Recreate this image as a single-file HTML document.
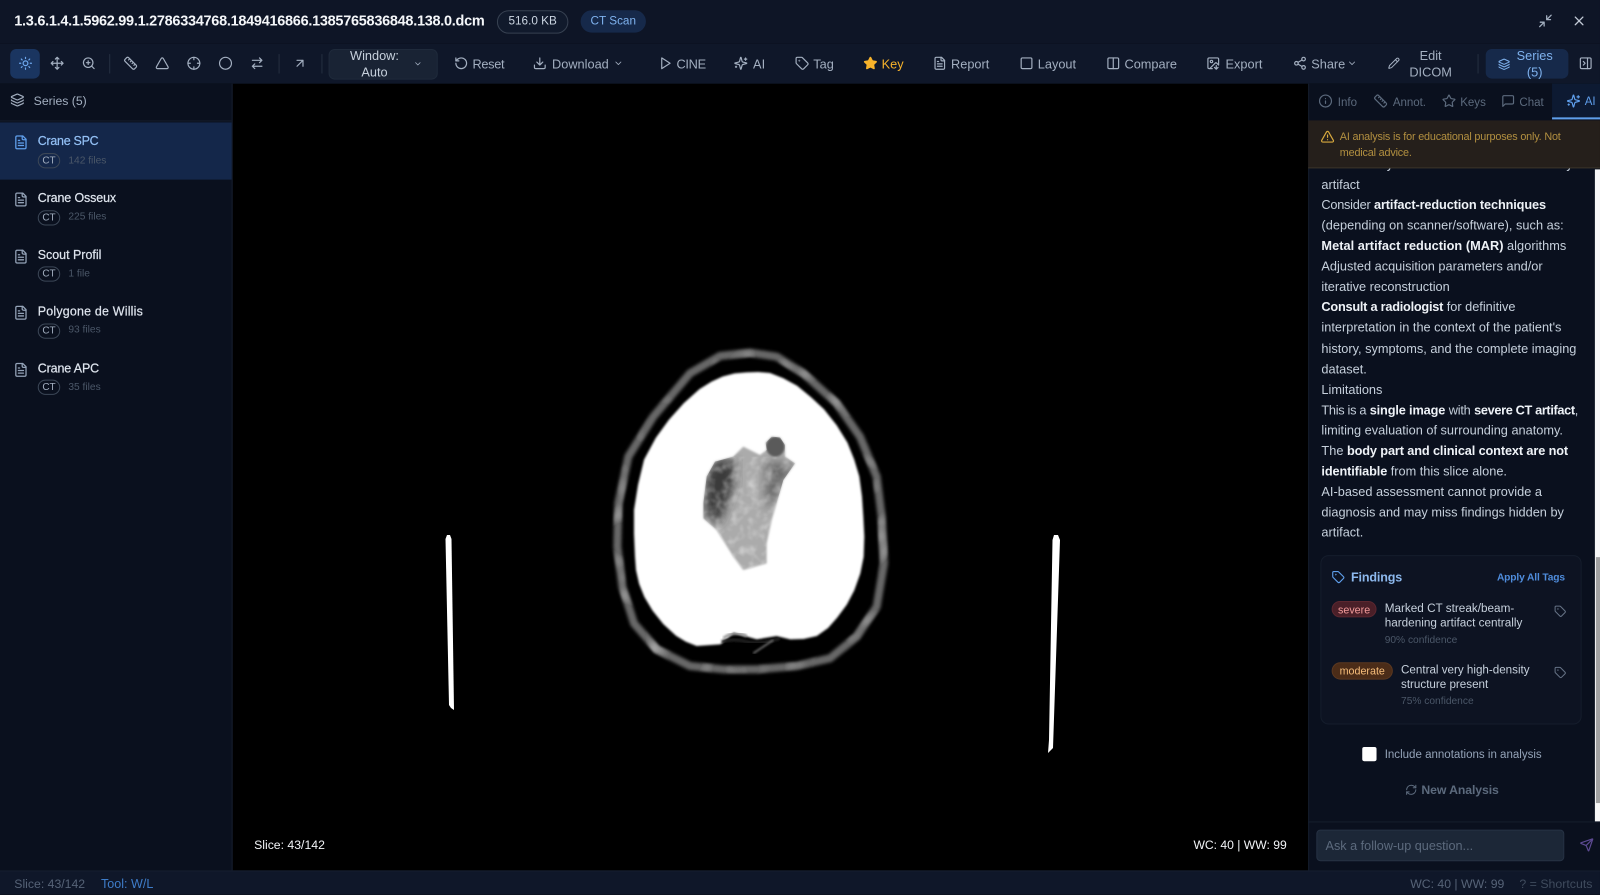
<!DOCTYPE html>
<html lang="en"><head><meta charset="utf-8"><title>DICOM Viewer</title>
<style>
html,body{margin:0;padding:0;width:1600px;height:895px;overflow:hidden;background:#000}
body{font-family:"Liberation Sans",sans-serif;position:relative}
#r{position:absolute;left:0;top:0;width:1568px;height:877.1px;transform:scale(1.020408);transform-origin:0 0;overflow:hidden;background:#000;color:#a3afc0;font-size:12.5px}
.b{position:absolute}
.t{position:absolute;white-space:nowrap;line-height:20px;height:20px}
.c{transform:translateX(-50%);text-align:center}
svg.i{position:absolute;fill:none;stroke:currentColor;stroke-width:2;stroke-linecap:round;stroke-linejoin:round;overflow:visible}
.tb{width:14px;height:14px;top:55px;color:#a3afc0}
.p{font-size:12.5px;color:#c6d0dc}
.p b{color:#eef2f7;font-weight:700;letter-spacing:-.13px}
.n{font-size:12.2px;color:#dfe5ee;-webkit-text-stroke:.2px currentColor}
.bd{position:absolute;left:37px;width:20px;height:13px;border:1px solid #3c4757;border-radius:8px;color:#a3afc0;font-size:9.8px;line-height:13px;text-align:center}
.f{font-size:10px;color:#4b5768}
.tab{font-size:11.3px;color:#5c6a7d}
.sep{position:absolute;top:53px;width:1px;height:19px;background:#252f40}
</style></head><body>
<svg width="0" height="0" style="position:absolute"><defs>
<symbol id="sun" viewBox="0 0 24 24"><circle cx="12" cy="12" r="4"/><path d="M12 2v2M12 20v2M4.93 4.93l1.41 1.41M17.66 17.66l1.41 1.41M2 12h2M20 12h2M6.34 17.66l-1.41 1.41M19.07 4.93l-1.41 1.41"/></symbol>
<symbol id="move" viewBox="0 0 24 24"><path d="M12 2v20M2 12h20M5 9l-3 3 3 3M9 5l3-3 3 3M15 19l-3 3-3-3M19 9l3 3-3 3"/></symbol>
<symbol id="zoom" viewBox="0 0 24 24"><circle cx="11" cy="11" r="8"/><path d="M21 21l-4.3-4.3M11 8v6M8 11h6"/></symbol>
<symbol id="ruler" viewBox="0 0 24 24"><path d="M21.3 15.3a2.4 2.4 0 0 1 0 3.4l-2.6 2.6a2.4 2.4 0 0 1-3.4 0L2.7 8.7a2.41 2.41 0 0 1 0-3.4l2.6-2.6a2.41 2.41 0 0 1 3.4 0Z"/><path d="M14.5 12.5l2-2M11.5 9.5l2-2M8.5 6.5l2-2M17.5 15.5l2-2"/></symbol>
<symbol id="tri" viewBox="0 0 24 24"><path d="M21.73 18l-8-14a2 2 0 0 0-3.48 0l-8 14A2 2 0 0 0 4 21h16a2 2 0 0 0 1.73-3"/></symbol>
<symbol id="cross" viewBox="0 0 24 24"><circle cx="12" cy="12" r="10"/><path d="M22 12h-4M6 12H2M12 6V2M12 22v-4"/></symbol>
<symbol id="circ" viewBox="0 0 24 24"><circle cx="12" cy="12" r="10"/></symbol>
<symbol id="swap" viewBox="0 0 24 24"><path d="M16 3l4 4-4 4M20 7H4M8 21l-4-4 4-4M4 17h16"/></symbol>
<symbol id="ur" viewBox="0 0 24 24"><path d="M7 7h10v10M7 17L17 7"/></symbol>
<symbol id="chev" viewBox="0 0 24 24"><path d="M6 9l6 6 6-6"/></symbol>
<symbol id="reset" viewBox="0 0 24 24"><path d="M3 12a9 9 0 1 0 9-9 9.75 9.75 0 0 0-6.74 2.74L3 8"/><path d="M3 3v5h5"/></symbol>
<symbol id="dl" viewBox="0 0 24 24"><path d="M21 15v4a2 2 0 0 1-2 2H5a2 2 0 0 1-2-2v-4M7 10l5 5 5-5M12 15V3"/></symbol>
<symbol id="play" viewBox="0 0 24 24"><polygon points="6 3 20 12 6 21 6 3"/></symbol>
<symbol id="spark" viewBox="0 0 24 24"><path d="M9.937 15.5A2 2 0 0 0 8.5 14.063l-6.135-1.582a.5.5 0 0 1 0-.962L8.5 9.936A2 2 0 0 0 9.937 8.5l1.582-6.135a.5.5 0 0 1 .963 0L14.063 8.5A2 2 0 0 0 15.5 9.937l6.135 1.581a.5.5 0 0 1 0 .964L15.5 14.063a2 2 0 0 0-1.437 1.437l-1.582 6.135a.5.5 0 0 1-.963 0z"/><path d="M20 3v4M22 5h-4M4 17v2M5 18H3"/></symbol>
<symbol id="tag" viewBox="0 0 24 24"><path d="M12.586 2.586A2 2 0 0 0 11.172 2H4a2 2 0 0 0-2 2v7.172a2 2 0 0 0 .586 1.414l8.704 8.704a2.426 2.426 0 0 0 3.42 0l6.58-6.58a2.426 2.426 0 0 0 0-3.42z"/><circle cx="7.5" cy="7.5" r=".5"/></symbol>
<symbol id="star" viewBox="0 0 24 24"><path d="M11.525 2.295a.53.53 0 0 1 .95 0l2.31 4.679a2.123 2.123 0 0 0 1.595 1.16l5.166.756a.53.53 0 0 1 .294.904l-3.736 3.638a2.123 2.123 0 0 0-.611 1.878l.882 5.14a.53.53 0 0 1-.771.56l-4.618-2.428a2.122 2.122 0 0 0-1.973 0L6.396 21.01a.53.53 0 0 1-.77-.56l.881-5.139a2.122 2.122 0 0 0-.611-1.879L2.16 9.795a.53.53 0 0 1 .294-.906l5.165-.755a2.122 2.122 0 0 0 1.597-1.16z"/></symbol>
<symbol id="file" viewBox="0 0 24 24"><path d="M15 2H6a2 2 0 0 0-2 2v16a2 2 0 0 0 2 2h12a2 2 0 0 0 2-2V7Z"/><path d="M14 2v4a2 2 0 0 0 2 2h4M10 9H8M16 13H8M16 17H8"/></symbol>
<symbol id="sq" viewBox="0 0 24 24"><rect x="3" y="3" width="18" height="18" rx="2"/></symbol>
<symbol id="cols" viewBox="0 0 24 24"><rect x="3" y="3" width="18" height="18" rx="2"/><path d="M12 3v18"/></symbol>
<symbol id="exp" viewBox="0 0 24 24"><path d="M10.3 21H5a2 2 0 0 1-2-2V5a2 2 0 0 1 2-2h14a2 2 0 0 1 2 2v10l-3.1-3.1a2 2 0 0 0-2.814.014L6 21"/><path d="M14 19l3 3v-6M17 22l3-3"/><circle cx="9" cy="9" r="2"/></symbol>
<symbol id="share" viewBox="0 0 24 24"><circle cx="18" cy="5" r="3"/><circle cx="6" cy="12" r="3"/><circle cx="18" cy="19" r="3"/><path d="M8.59 13.51l6.83 3.98M15.41 6.51l-6.82 3.98"/></symbol>
<symbol id="pen" viewBox="0 0 24 24"><path d="M21.174 6.812a1 1 0 0 0-3.986-3.987L3.842 16.174a2 2 0 0 0-.5.83l-1.321 4.352a.5.5 0 0 0 .623.622l4.353-1.32a2 2 0 0 0 .83-.497z"/><path d="M15 5l4 4"/></symbol>
<symbol id="lay" viewBox="0 0 24 24"><path d="M12.83 2.18a2 2 0 0 0-1.66 0L2.6 6.08a1 1 0 0 0 0 1.83l8.58 3.91a2 2 0 0 0 1.66 0l8.58-3.9a1 1 0 0 0 0-1.83z"/><path d="M2 12a1 1 0 0 0 .58.91l8.6 3.91a2 2 0 0 0 1.65 0l8.58-3.9A1 1 0 0 0 22 12"/><path d="M2 17a1 1 0 0 0 .58.91l8.6 3.91a2 2 0 0 0 1.65 0l8.58-3.9A1 1 0 0 0 22 17"/></symbol>
<symbol id="panel" viewBox="0 0 24 24"><rect x="3" y="3" width="18" height="18" rx="2"/><path d="M15 3v18M8 9l3 3-3 3"/></symbol>
<symbol id="info" viewBox="0 0 24 24"><circle cx="12" cy="12" r="10"/><path d="M12 16v-4M12 8h.01"/></symbol>
<symbol id="msg" viewBox="0 0 24 24"><path d="M21 15a2 2 0 0 1-2 2H7l-4 4V5a2 2 0 0 1 2-2h14a2 2 0 0 1 2 2z"/></symbol>
<symbol id="warn" viewBox="0 0 24 24"><path d="M21.73 18l-8-14a2 2 0 0 0-3.48 0l-8 14A2 2 0 0 0 4 21h16a2 2 0 0 0 1.73-3"/><path d="M12 9v4M12 17h.01"/></symbol>
<symbol id="ref" viewBox="0 0 24 24"><path d="M3 12a9 9 0 0 1 9-9 9.75 9.75 0 0 1 6.74 2.74L21 8"/><path d="M21 3v5h-5"/><path d="M21 12a9 9 0 0 1-9 9 9.75 9.75 0 0 1-6.74-2.74L3 16"/><path d="M8 16H3v5"/></symbol>
<symbol id="send" viewBox="0 0 24 24"><path d="M14.536 21.686a.5.5 0 0 0 .937-.024l6.5-19a.496.496 0 0 0-.635-.635l-19 6.5a.5.5 0 0 0-.024.937l7.93 3.18a2 2 0 0 1 1.112 1.11z"/><path d="M21.854 2.147l-10.94 10.939"/></symbol>
<symbol id="min" viewBox="0 0 24 24"><path d="M14 10l7-7M20 10h-6V4M3 21l7-7M4 14h6v6"/></symbol>
<symbol id="x" viewBox="0 0 24 24"><path d="M18 6L6 18M6 6l12 12"/></symbol>
<filter id="bl" x="-5%" y="-5%" width="110%" height="110%"><feGaussianBlur stdDeviation="3.5"/></filter>
<filter id="bl3" x="-5%" y="-5%" width="110%" height="110%"><feGaussianBlur stdDeviation="5"/></filter>
<filter id="bl2" x="-20%" y="-20%" width="140%" height="140%"><feGaussianBlur stdDeviation="14"/></filter>
<filter id="nz" x="0" y="0" width="100%" height="100%"><feTurbulence type="fractalNoise" baseFrequency=".04" numOctaves="2" seed="4"/><feColorMatrix values="0 0 0 0 .9  0 0 0 0 .9  0 0 0 0 .9  1.3 0 0 0 -.55"/><feGaussianBlur stdDeviation="2.5"/></filter>
<filter id="nz2" x="0" y="0" width="100%" height="100%"><feTurbulence type="fractalNoise" baseFrequency=".012" numOctaves="2" seed="9"/><feColorMatrix values="0 0 0 0 .75  0 0 0 0 .75  0 0 0 0 .75  1.4 0 0 0 -.7"/></filter>
<clipPath id="lc"><polygon points="340,520 350,440 375,395 430,380 460,350 510,375 530,360 527,338 545,320 570,322 585,345 585,380 615,400 580,450 545,570 530,640 530,700 460,720 430,680 380,600 340,565"/></clipPath>
</defs></svg>

<div id="r">
<!-- header -->
<div class="b" style="left:0;top:0;width:1568px;height:43px;background:#0e1526"></div>
<div class="b" style="left:0;top:43px;width:1568px;height:39px;background:#0f1729"></div>
<div class="t" style="left:14px;top:11px;font-size:14.2px;font-weight:700;color:#f4f6f9;letter-spacing:-.27px">1.3.6.1.4.1.5962.99.1.2786334768.1849416866.1385765836848.138.0.dcm</div>
<div class="b" style="left:487px;top:10px;width:68px;height:21px;border:1px solid #374151;border-radius:12px;background:#111a2c"></div>
<div class="t c" style="left:522px;top:11px;font-size:11.5px;color:#cbd5e1">516.0 KB</div>
<div class="b" style="left:569px;top:10px;width:64px;height:22px;border-radius:12px;background:#16294a"></div>
<div class="t c" style="left:601px;top:11px;font-size:11.5px;color:#7fb2ee">CT Scan</div>
<svg class="i" style="left:1507px;top:13px;width:15px;height:15px;color:#a3afc0"><use href="#min"/></svg>
<svg class="i" style="left:1540px;top:13px;width:15px;height:15px;color:#c2cad6"><use href="#x"/></svg>

<!-- toolbar -->
<div class="b" style="left:10px;top:48px;width:29px;height:29px;border-radius:6px;background:#1a3560"></div>
<svg class="i tb" style="left:18px;color:#6ea8ee"><use href="#sun"/></svg>
<svg class="i tb" style="left:49px"><use href="#move"/></svg>
<svg class="i tb" style="left:80px"><use href="#zoom"/></svg>
<div class="sep" style="left:107px"></div>
<svg class="i tb" style="left:121px"><use href="#ruler"/></svg>
<svg class="i tb" style="left:152px"><use href="#tri"/></svg>
<svg class="i tb" style="left:183px"><use href="#cross"/></svg>
<svg class="i tb" style="left:214px"><use href="#circ"/></svg>
<svg class="i tb" style="left:245px"><use href="#swap"/></svg>
<div class="sep" style="left:273px"></div>
<svg class="i tb" style="left:287px"><use href="#ur"/></svg>
<div class="sep" style="left:315px"></div>
<div class="b" style="left:322px;top:48px;width:105px;height:28px;border:1px solid #1f2a3b;border-radius:6px;background:#192334"></div>
<div class="t c" style="left:367px;top:45px;color:#c6d0dc">Window:</div>
<div class="t c" style="left:367px;top:61px;color:#c6d0dc">Auto</div>
<svg class="i" style="left:405px;top:58px;width:9px;height:9px;color:#a3afc0"><use href="#chev"/></svg>

<svg class="i tb" style="left:445px"><use href="#reset"/></svg><div class="t" style="left:463px;top:52.5px;letter-spacing:-.3px">Reset</div>
<svg class="i tb" style="left:522px"><use href="#dl"/></svg><div class="t" style="left:541px;top:52.5px">Download</div>
<svg class="i" style="left:601px;top:57px;width:10px;height:10px;color:#a3afc0"><use href="#chev"/></svg>
<svg class="i tb" style="left:645px"><use href="#play"/></svg><div class="t" style="left:663px;top:52.5px;letter-spacing:-.3px">CINE</div>
<svg class="i tb" style="left:719px"><use href="#spark"/></svg><div class="t" style="left:738px;top:52.5px">AI</div>
<svg class="i tb" style="left:779px"><use href="#tag"/></svg><div class="t" style="left:797px;top:52.5px">Tag</div>
<svg class="i tb" style="left:846px;color:#f7b32b;fill:#f7b32b"><use href="#star"/></svg><div class="t" style="left:864px;top:52.5px;color:#f7b32b">Key</div>
<svg class="i tb" style="left:914px"><use href="#file"/></svg><div class="t" style="left:932px;top:52.5px">Report</div>
<svg class="i tb" style="left:999px"><use href="#sq"/></svg><div class="t" style="left:1017px;top:52.5px">Layout</div>
<svg class="i tb" style="left:1084px"><use href="#cols"/></svg><div class="t" style="left:1102px;top:52.5px">Compare</div>
<svg class="i tb" style="left:1182px"><use href="#exp"/></svg><div class="t" style="left:1201px;top:52.5px">Export</div>
<svg class="i tb" style="left:1267px"><use href="#share"/></svg><div class="t" style="left:1285px;top:52.5px">Share</div>
<svg class="i" style="left:1320px;top:57px;width:10px;height:10px;color:#a3afc0"><use href="#chev"/></svg>
<svg class="i" style="left:1360px;top:56px;width:12px;height:12px;color:#a3afc0"><use href="#pen"/></svg>
<div class="t c" style="left:1402px;top:45px">Edit</div><div class="t c" style="left:1402px;top:61px">DICOM</div>
<div class="sep" style="left:1448px"></div>
<div class="b" style="left:1456px;top:48px;width:81px;height:29px;border-radius:6px;background:#16294a"></div>
<svg class="i" style="left:1468px;top:57px;width:12px;height:12px;color:#7fb2ee"><use href="#lay"/></svg>
<div class="t c" style="left:1504px;top:45px;color:#7fb2ee">Series</div><div class="t c" style="left:1504px;top:61px;color:#7fb2ee">(5)</div>
<svg class="i tb" style="left:1547px;color:#a3afc0"><use href="#panel"/></svg>

<!-- sidebar -->
<div class="b" style="left:0;top:82px;width:228px;height:771px;background:#0a101e;border-right:1px solid #161e2d;box-sizing:border-box"></div>
<div class="b" style="left:0;top:118px;width:227px;height:1px;background:#141c2b"></div>
<svg class="i" style="left:10px;top:91px;width:14px;height:14px;color:#a3afc0"><use href="#lay"/></svg>
<div class="t" style="left:33px;top:88.5px;color:#a3afc0;font-size:12px">Series (5)</div>
<div class="b" style="left:0;top:120px;width:227px;height:56px;background:#14274a"></div>
<svg class="i" style="left:13px;top:132px;width:15px;height:15px;color:#5f9fec"><use href="#file"/></svg>
<div class="t n" style="left:37px;top:128px;color:#93c0f5;letter-spacing:-.25px">Crane SPC</div>
<div class="bd" style="top:150px">CT</div><div class="t f" style="left:67px;top:147.5px">142 files</div>
<svg class="i" style="left:13px;top:188px;width:15px;height:15px;color:#94a3b8"><use href="#file"/></svg>
<div class="t n" style="left:37px;top:184px;letter-spacing:-.1px">Crane Osseux</div>
<div class="bd" style="top:205.5px">CT</div><div class="t f" style="left:67px;top:203px">225 files</div>
<svg class="i" style="left:13px;top:243.5px;width:15px;height:15px;color:#94a3b8"><use href="#file"/></svg>
<div class="t n" style="left:37px;top:239.5px">Scout Profil</div>
<div class="bd" style="top:261px">CT</div><div class="t f" style="left:67px;top:258.5px">1 file</div>
<svg class="i" style="left:13px;top:299px;width:15px;height:15px;color:#94a3b8"><use href="#file"/></svg>
<div class="t n" style="left:37px;top:295px;letter-spacing:.2px">Polygone de Willis</div>
<div class="bd" style="top:316.5px">CT</div><div class="t f" style="left:67px;top:314px">93 files</div>
<svg class="i" style="left:13px;top:355px;width:15px;height:15px;color:#94a3b8"><use href="#file"/></svg>
<div class="t n" style="left:37px;top:351px;letter-spacing:-.1px">Crane APC</div>
<div class="bd" style="top:372px">CT</div><div class="t f" style="left:67px;top:369.5px">35 files</div>

<!-- viewer overlay -->
<div class="t" style="left:249px;top:817.5px;color:#f2f4f7;font-size:12px">Slice: 43/142</div>
<div class="t" style="right:307px;top:817.5px;color:#f2f4f7;font-size:11.9px">WC: 40 | WW: 99</div>

<!-- right panel -->
<div class="b" style="left:1282px;top:82px;width:286px;height:771px;background:#0a101e;border-left:1px solid #161e2d;box-sizing:border-box"></div>
<div class="b" style="left:1521px;top:82px;width:47px;height:33px;background:#0d1a32"></div>
<div class="b" style="left:1521px;top:115px;width:47px;height:2px;background:#5f9fec"></div>
<svg class="i" style="left:1292px;top:92px;width:14px;height:14px;color:#5c6a7d"><use href="#info"/></svg><div class="t tab" style="left:1311px;top:90.5px">Info</div>
<svg class="i" style="left:1346px;top:92px;width:14px;height:14px;color:#5c6a7d"><use href="#ruler"/></svg><div class="t tab" style="left:1365px;top:90.5px;letter-spacing:-.05px">Annot.</div>
<svg class="i" style="left:1413px;top:92px;width:14px;height:14px;color:#5c6a7d"><use href="#star"/></svg><div class="t tab" style="left:1431px;top:90.5px">Keys</div>
<svg class="i" style="left:1471px;top:92px;width:14px;height:14px;color:#5c6a7d"><use href="#msg"/></svg><div class="t tab" style="left:1489px;top:90.5px">Chat</div>
<svg class="i" style="left:1535px;top:92px;width:14px;height:14px;color:#5f9fec"><use href="#spark"/></svg><div class="t tab" style="left:1553px;top:89.5px;color:#5f9fec">AI</div>

<!-- content lines -->
<div class="t p" style="left:1359px;top:151px">y</div><div class="t p" style="left:1535px;top:151px">y</div>
<div class="b" style="left:1282px;top:118px;width:286px;height:47px;background:#251f1b;border-bottom:1px solid #3a342a;box-sizing:border-box"></div>
<svg class="i" style="left:1294px;top:127px;width:14px;height:14px;color:#d8a93e"><use href="#warn"/></svg>
<div class="t" style="left:1313px;top:124px;font-size:10.6px;color:#b39040;letter-spacing:-.17px">AI analysis is for educational purposes only. Not</div>
<div class="t" style="left:1313px;top:140px;font-size:10.6px;color:#b39040;letter-spacing:-.17px">medical advice.</div>

<div class="t p" style="left:1295px;top:171px">artifact</div>
<div class="t p" style="left:1295px;top:191px"><span style="letter-spacing:-.25px">Consider</span> <b>artifact-reduction techniques</b></div>
<div class="t p" style="left:1295px;top:211px;letter-spacing:.03px">(depending on scanner/software), such as:</div>
<div class="t p" style="left:1295px;top:231px"><b style="letter-spacing:.02px">Metal artifact reduction (MAR)</b> <span style="letter-spacing:.05px">algorithms</span></div>
<div class="t p" style="left:1295px;top:251px">Adjusted acquisition parameters and/or</div>
<div class="t p" style="left:1295px;top:271px">iterative reconstruction</div>
<div class="t p" style="left:1295px;top:291px"><b style="letter-spacing:-.24px">Consult a radiologist</b> for definitive</div>
<div class="t p" style="left:1295px;top:311px">interpretation in the context of the patient's</div>
<div class="t p" style="left:1295px;top:331.5px">history, symptoms, and the complete imaging</div>
<div class="t p" style="left:1295px;top:351.5px">dataset.</div>
<div class="t p" style="left:1295px;top:371.5px">Limitations</div>
<div class="t p" style="left:1295px;top:391.5px"><span style="letter-spacing:-.3px">This is a</span> <b style="letter-spacing:-.15px">single image</b> <span style="letter-spacing:-.2px">with</span> <b style="letter-spacing:-.35px">severe CT artifact</b>,</div>
<div class="t p" style="left:1295px;top:412px">limiting evaluation of surrounding anatomy.</div>
<div class="t p" style="left:1295px;top:432px">The <b style="letter-spacing:-.13px">body part and clinical context are not</b></div>
<div class="t p" style="left:1295px;top:452px"><b>identifiable</b> from this slice alone.</div>
<div class="t p" style="left:1295px;top:472px">AI-based assessment cannot provide a</div>
<div class="t p" style="left:1295px;top:492px">diagnosis and may miss findings hidden by</div>
<div class="t p" style="left:1295px;top:512px">artifact.</div>

<!-- findings -->
<div class="b" style="left:1294px;top:544px;width:256px;height:166px;border:1px solid #151d2c;border-radius:8px;background:#0d1322;box-sizing:border-box"></div>
<svg class="i" style="left:1305px;top:559px;width:13px;height:13px;color:#5f9fec"><use href="#tag"/></svg>
<div class="t" style="left:1324px;top:556px;font-size:12.3px;font-weight:700;color:#8db9ee;letter-spacing:-.15px">Findings</div>
<div class="t" style="left:1467px;top:556.5px;font-size:10px;font-weight:700;color:#4f8ddd;letter-spacing:-.12px">Apply All Tags</div>
<div class="b" style="left:1305px;top:589px;width:44px;height:16px;border-radius:9px;background:#4a1f28;border:1px solid #5c2730;box-sizing:border-box"></div>
<div class="t c" style="left:1327px;top:587.5px;font-size:10.5px;color:#f29a9a">severe</div>
<div class="t" style="left:1357px;top:586.5px;font-size:11.5px;color:#c6d0dc">Marked CT streak/beam-</div>
<div class="t" style="left:1357px;top:600.5px;font-size:11.5px;color:#c6d0dc">hardening artifact centrally</div>
<div class="t f" style="left:1357px;top:618px">90% confidence</div>
<svg class="i" style="left:1523px;top:593px;width:12px;height:12px;color:#667386"><use href="#tag"/></svg>
<div class="b" style="left:1305px;top:649px;width:60px;height:17px;border-radius:9px;background:#4b2c18;border:1px solid #5b3820;box-sizing:border-box"></div>
<div class="t c" style="left:1335px;top:648px;font-size:10.5px;color:#f7bd7a">moderate</div>
<div class="t" style="left:1373px;top:647px;font-size:11.4px;color:#c6d0dc">Central very high-density</div>
<div class="t" style="left:1373px;top:660.5px;font-size:11.4px;color:#c6d0dc">structure present</div>
<div class="t f" style="left:1373px;top:678px">75% confidence</div>
<svg class="i" style="left:1523px;top:653px;width:12px;height:12px;color:#667386"><use href="#tag"/></svg>

<div class="b" style="left:1335px;top:732px;width:14px;height:14px;background:#fff;border-radius:2px"></div>
<div class="t" style="left:1357px;top:730px;font-size:11.3px;color:#94a3b8">Include annotations in analysis</div>
<svg class="i" style="left:1377px;top:768px;width:12px;height:12px;color:#5c6a7d"><use href="#ref"/></svg>
<div class="t" style="left:1393px;top:764px;font-size:12px;font-weight:700;color:#5c6a7d;letter-spacing:-.1px">New Analysis</div>

<!-- scrollbar -->
<div class="b" style="left:1562.5px;top:166px;width:5.5px;height:639px;background:#f7f7f7"></div>
<div class="b" style="left:1563.5px;top:546px;width:4.5px;height:241px;background:#a2a2a2"></div>

<div class="b" style="left:1282px;top:805px;width:286px;height:1px;background:#161e2d"></div>
<div class="b" style="left:1290px;top:813px;width:243px;height:31px;border:1px solid #263244;border-radius:4px;background:#1c2737;box-sizing:border-box"></div>
<div class="t" style="left:1299px;top:819px;font-size:12.4px;color:#5c6a7d">Ask a follow-up question...</div>
<svg class="i" style="left:1548px;top:821px;width:14px;height:14px;color:#5d4a93"><use href="#send"/></svg>

<!-- status -->
<div class="b" style="left:0;top:853px;width:1568px;height:24px;background:#0f1729;border-top:1px solid #161f30;box-sizing:border-box"></div>
<div class="t" style="left:14px;top:855.5px;font-size:12px;color:#566377">Slice: 43/142</div>
<div class="t" style="left:99px;top:855.5px;font-size:12.3px;color:#3e7cc8">Tool: W/L</div>
<div class="t" style="left:1382px;top:855.5px;font-size:12px;color:#566377">WC: 40 | WW: 99</div>
<div class="t" style="left:1489px;top:855.5px;font-size:12.1px;color:#3f4b5d">? = Shortcuts</div>
</div>

<!-- CT image in reference pixels -->
<svg style="position:absolute;left:0;top:0" width="1600" height="895">
<polygon fill="#fff" points="445.5,539 447,535 450,535 451.5,539 454,710 451,708 449,705"/>
<polygon fill="#fff" points="1052.5,540 1054,535 1058,535 1060,540 1053,748 1048,753 1049,740"/>
<g transform="translate(590 330) scale(.33333)">
<mask id="rm" maskUnits="userSpaceOnUse" x="0" y="0" width="960" height="1080"><polygon fill="none" stroke="#fff" stroke-width="26" stroke-linejoin="round" filter="url(#bl)" points="480,68 390,78 300,130 190,260 115,380 85,520 82,650 97,770 132,880 200,958 300,1008 400,1018 500,1018 620,1008 720,985 800,920 860,830 882,700 875,560 860,440 810,320 740,220 640,130 560,80"/></mask>
<polygon filter="url(#bl3)" fill="none" stroke="#686868" stroke-width="24" stroke-linejoin="round" points="480,68 390,78 300,130 190,260 115,380 85,520 82,650 97,770 132,880 200,958 300,1008 400,1018 500,1018 620,1008 720,985 800,920 860,830 882,700 875,560 860,440 810,320 740,220 640,130 560,80"/>
<g mask="url(#rm)"><rect x="40" y="20" width="880" height="1040" filter="url(#nz2)"/></g>
<polygon filter="url(#bl)" fill="#fff" stroke="#fff" stroke-width="6" stroke-linejoin="round" points="470,130 505,129 540,132 580,148 620,170 660,203 700,240 738,288 770,340 790,390 805,440 813,500 817,560 820,620 818,680 808,730 790,780 768,822 740,860 712,892 680,915 640,924 600,925 560,915 500,925 430,905 390,940 320,945 288,932 260,915 222,880 190,840 166,800 150,760 141,720 138,680 135,610 135,540 147,465 165,390 200,325 240,270 283,222 330,180 365,158 400,142 435,133"/>
<g filter="url(#bl)"><polygon fill="#ababab" points="340,520 350,440 375,395 430,380 460,350 510,375 530,360 527,338 545,320 570,322 585,345 585,380 615,400 580,450 545,570 530,640 530,700 460,720 430,680 380,600 340,565"/></g>
<g clip-path="url(#lc)">
<polygon filter="url(#bl2)" fill="#3a3a3a" points="345,520 350,430 385,385 440,395 430,470 405,540 385,585 345,550"/>
<polygon filter="url(#bl2)" fill="#6a6a6a" points="525,395 615,400 570,490 525,540"/>
<ellipse cx="556" cy="350" rx="28" ry="30" fill="#5a5a5a" filter="url(#bl)"/>
<rect x="340" y="380" width="270" height="340" filter="url(#nz)" opacity=".75"/>
</g>
<path d="M395 935 Q430 925 470 935 T570 925" fill="none" stroke="#222" stroke-width="9" filter="url(#bl)"/>
<path d="M400 925 Q430 900 470 918" fill="none" stroke="#999" stroke-width="8" filter="url(#bl)"/>
<path d="M490 970L550 930" stroke="#777" stroke-width="5" filter="url(#bl)"/>
</g>
</svg>
</body></html>
